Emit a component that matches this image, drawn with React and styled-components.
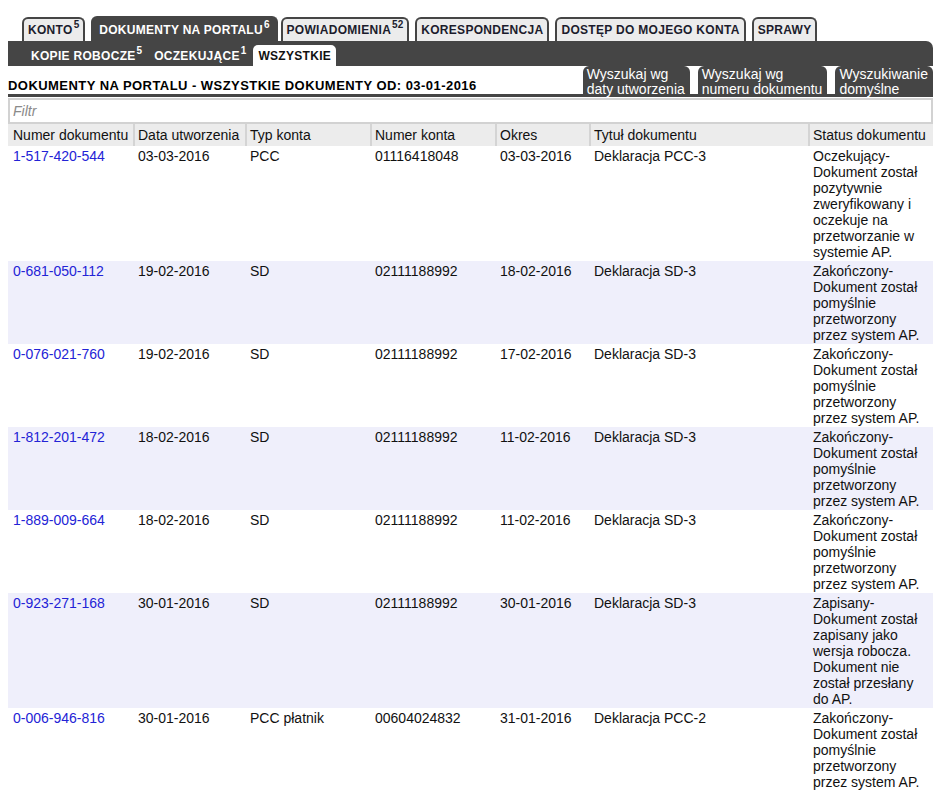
import React from 'react';
import styled, { createGlobalStyle } from 'styled-components';

const GlobalStyle = createGlobalStyle`
    body {
        margin: 8px;
        background: #fff;
        font-family: "Liberation Sans", Arial, sans-serif;
        color: #111;
    }
`;

const DARK = '#454545';

const Page = styled.div`
    width: 925px;
    padding-top: 9px;
`;

const TabRow = styled.div`
    display: flex;
    align-items: flex-end;
    padding-left: 14px;
    gap: 6px;
    height: 24px;
`;

const Tab = styled.div`
    box-sizing: border-box;
    display: flex;
    align-items: center;
    border: 2px solid ${DARK};
    border-bottom: none;
    border-radius: 6px 6px 0 0;
    background: ${p => (p.$active ? DARK : '#ececec')};
    color: ${p => (p.$active ? '#fff' : '#1c1c2c')};
    font-size: 12px;
    font-weight: bold;
    letter-spacing: 0.3px;
    white-space: nowrap;
    height: ${p => (p.$active ? '25px' : '24px')};
    padding: ${p => (p.$active ? '0 6px' : '0 4px')};
    margin-right: ${p => (p.$active ? '-3px' : '0')};
`;

const Sup = styled.span`
    font-size: 10px;
    line-height: 0;
    margin-left: 1px;
    letter-spacing: 0;
    position: relative;
    top: -5px;
`;

const SubBar = styled.div`
    background: ${DARK};
    height: 25px;
    border-radius: 0 7px 0 0;
    display: flex;
    align-items: flex-end;
    padding-left: 18px;
`;

const SubTab = styled.div`
    height: 21px;
    box-sizing: border-box;
    padding: 1px 5px 0;
    display: flex;
    align-items: center;
    margin-right: ${p => (p.$active ? '0' : '2px')};
    border-radius: 5px 5px 0 0;
    background: ${p => (p.$active ? '#fff' : 'transparent')};
    color: ${p => (p.$active ? '#111' : '#fff')};
    font-size: 12px;
    font-weight: bold;
    letter-spacing: 0.3px;
    white-space: nowrap;
`;

const TitleBar = styled.div`
    display: flex;
    justify-content: space-between;
    align-items: stretch;
    border-bottom: 3px solid ${DARK};
    height: 28px;
`;

const Title = styled.h1`
    margin: 0;
    align-self: flex-end;
    padding-bottom: 1px;
    font-size: 13px;
    font-weight: bold;
    letter-spacing: 0.45px;
    color: #000;
`;

const SearchGroup = styled.div`
    display: flex;
    gap: 8px;
`;

const SearchButton = styled.div`
    background: ${DARK};
    color: #fff;
    border-radius: 6px 6px 0 0;
    padding: 1px 5px 0 4px;
    font-size: 14px;
    line-height: 15px;
    cursor: pointer;
`;

const Filter = styled.input`
    display: block;
    width: 100%;
    box-sizing: border-box;
    height: 26px;
    margin-top: 1px;
    border: 2px solid #d2d2d2;
    padding: 0 3px;
    font-family: "Liberation Sans", Arial, sans-serif;
    font-size: 14px;
    outline: none;
    &::placeholder {
        color: #8a8a8a;
        font-style: italic;
    }
`;

const Table = styled.table`
    width: 925px;
    border-collapse: separate;
    border-spacing: 0;
    table-layout: fixed;
    font-size: 14px;
    line-height: 16px;
`;

const HeadCell = styled.th`
    background: #ececec;
    font-weight: normal;
    text-align: left;
    padding: 3px 5px 3px 3px;
    border-left: 2px solid #d4d4d4;
    color: #111;
    white-space: nowrap;
    overflow: hidden;
    &:first-child {
        border-left: none;
        padding-left: 5px;
    }
`;

const Row = styled.tr`
    background: ${p => (p.$alt ? '#efeffb' : '#fff')};
`;

const Cell = styled.td`
    vertical-align: top;
    padding: 2px 5px 1px;
    color: #111;
`;

const DocLink = styled.a`
    color: #2323d6;
    text-decoration: none;
`;

const columns = [
    ['Numer dokumentu', 125],
    ['Data utworzenia', 112],
    ['Typ konta', 125],
    ['Numer konta', 125],
    ['Okres', 94],
    ['Tytuł dokumentu', 219],
    ['Status dokumentu', 125],
];

const done = ['Zakończony-', 'Dokument został', 'pomyślnie', 'przetworzony', 'przez system AP.'];

const rows = [
    ['1-517-420-544', '03-03-2016', 'PCC', '01116418048', '03-03-2016', 'Deklaracja PCC-3',
        ['Oczekujący-', 'Dokument został', 'pozytywnie', 'zweryfikowany i', 'oczekuje na', 'przetworzanie w', 'systemie AP.']],
    ['0-681-050-112', '19-02-2016', 'SD', '02111188992', '18-02-2016', 'Deklaracja SD-3', done],
    ['0-076-021-760', '19-02-2016', 'SD', '02111188992', '17-02-2016', 'Deklaracja SD-3', done],
    ['1-812-201-472', '18-02-2016', 'SD', '02111188992', '11-02-2016', 'Deklaracja SD-3', done],
    ['1-889-009-664', '18-02-2016', 'SD', '02111188992', '11-02-2016', 'Deklaracja SD-3', done],
    ['0-923-271-168', '30-01-2016', 'SD', '02111188992', '30-01-2016', 'Deklaracja SD-3',
        ['Zapisany-', 'Dokument został', 'zapisany jako', 'wersja robocza.', 'Dokument nie', 'został przesłany', 'do AP.']],
    ['0-006-946-816', '30-01-2016', 'PCC płatnik', '00604024832', '31-01-2016', 'Deklaracja PCC-2', done],
];

const tabs = [
    ['KONTO', '5'],
    ['DOKUMENTY NA PORTALU', '6', true],
    ['POWIADOMIENIA', '52'],
    ['KORESPONDENCJA'],
    ['DOSTĘP DO MOJEGO KONTA'],
    ['SPRAWY'],
];

export default function App() {
    return (
        <Page>
            <GlobalStyle />
            <TabRow>
                {tabs.map(([label, count, active]) => (
                    <Tab key={label} $active={active}>
                        {label}{count && <Sup>{count}</Sup>}
                    </Tab>
                ))}
            </TabRow>
            <SubBar>
                <SubTab>KOPIE ROBOCZE<Sup>5</Sup></SubTab>
                <SubTab>OCZEKUJĄCE<Sup>1</Sup></SubTab>
                <SubTab $active>WSZYSTKIE</SubTab>
            </SubBar>
            <TitleBar>
                <Title>DOKUMENTY NA PORTALU - WSZYSTKIE DOKUMENTY OD: 03-01-2016</Title>
                <SearchGroup>
                    <SearchButton>Wyszukaj wg<br />daty utworzenia</SearchButton>
                    <SearchButton>Wyszukaj wg<br />numeru dokumentu</SearchButton>
                    <SearchButton>Wyszukiwanie<br />domyślne</SearchButton>
                </SearchGroup>
            </TitleBar>
            <Filter placeholder="Filtr" />
            <Table>
                <colgroup>
                    {columns.map(([name, w]) => <col key={name} style={{ width: w }} />)}
                </colgroup>
                <thead>
                    <tr>
                        {columns.map(([name]) => <HeadCell key={name}>{name}</HeadCell>)}
                    </tr>
                </thead>
                <tbody>
                    {rows.map((r, i) => (
                        <Row key={r[0]} $alt={i % 2 === 1}>
                            <Cell><DocLink href="#">{r[0]}</DocLink></Cell>
                            <Cell>{r[1]}</Cell>
                            <Cell>{r[2]}</Cell>
                            <Cell>{r[3]}</Cell>
                            <Cell>{r[4]}</Cell>
                            <Cell>{r[5]}</Cell>
                            <Cell>
                                {r[6].map((line, j) => <div key={j}>{line}</div>)}
                            </Cell>
                        </Row>
                    ))}
                </tbody>
            </Table>
        </Page>
    );
}
